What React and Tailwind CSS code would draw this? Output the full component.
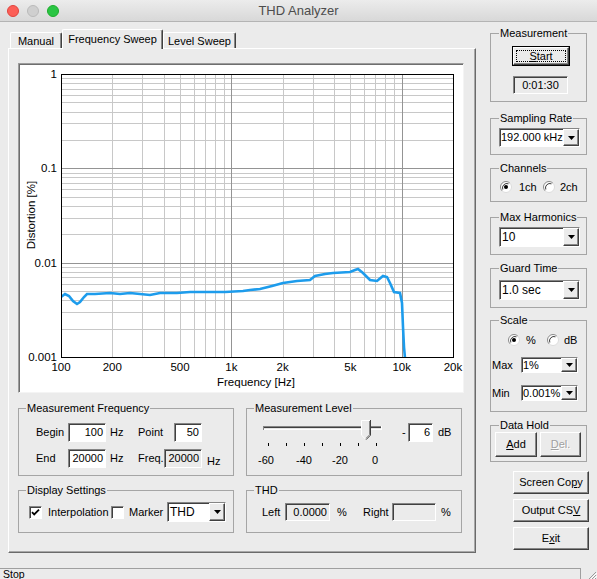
import React from "react";

const sunken =
  "border border-t-[#858585] border-l-[#858585] border-b-white border-r-white shadow-[inset_1px_1px_0_#404040]";
const raised =
  "border border-t-white border-l-white border-b-[#404040] border-r-[#404040] shadow-[inset_-1px_-1px_0_#878787]";

function Group({ title, className = "", legendClass = "ml-[7px]", children }) {
  return (
    <fieldset className={`border border-[#a5a5a5] p-0 m-0 min-w-0 ${className}`}>
      <legend className={`${legendClass} px-[1px] leading-[13px]`}>{title}</legend>
      {children}
    </fieldset>
  );
}

function Field({ className = "", children, white = true, align = "justify-end pr-[2px]" }) {
  return (
    <div
      className={`flex items-center ${align} ${white ? "bg-white" : "bg-[#ebebeb]"} ${sunken} ${className} leading-none whitespace-nowrap overflow-hidden`}
    >
      {children}
    </div>
  );
}

function Arrow() {
  return (
    <svg width="7" height="4" viewBox="0 0 7 4">
      <path d="M0 0H7L3.5 4Z" fill="#000" />
    </svg>
  );
}

function Combo({ className = "", text, textClass = "text-[12px] pl-[2px]" }) {
  return (
    <div className={`flex bg-white ${sunken} ${className}`}>
      <div className={`flex-1 min-w-0 flex items-center overflow-hidden whitespace-nowrap leading-none ${textClass}`}>
        {text}
      </div>
      <div className={`w-[16px] shrink-0 bg-[#ebebeb] ${raised} flex items-center justify-center`}>
        <Arrow />
      </div>
    </div>
  );
}

function Radio({ checked }) {
  return (
    <svg width="12" height="12" viewBox="0 0 12 12" className="shrink-0">
      <circle cx="6" cy="6" r="5.5" fill="#fff" />
      <path d="M2.11 9.89A5.5 5.5 0 0 1 9.89 2.11" fill="none" stroke="#8a8a8a" strokeWidth="1" />
      <path d="M9.89 2.11A5.5 5.5 0 0 1 2.11 9.89" fill="none" stroke="#dcdcdc" strokeWidth="1" />
      <path d="M2.8 8.5A4.4 4.4 0 0 1 8.5 2.8" fill="none" stroke="#404040" strokeWidth="1" />
      {checked && <circle cx="6" cy="6" r="2" fill="#000" />}
    </svg>
  );
}

function Check({ checked }) {
  return (
    <div className={`w-[13px] h-[13px] bg-white ${sunken} shrink-0 flex items-center justify-center`}>
      {checked && (
        <svg width="9" height="9" viewBox="0 0 9 9">
          <path d="M1 4.2L3.2 6.4L8 1.6" fill="none" stroke="#000" strokeWidth="1.8" />
        </svg>
      )}
    </div>
  );
}

function Btn({ className = "", children, disabled }) {
  return (
    <div
      className={`flex items-center justify-center bg-[#ebebeb] ${raised} ${className} ${
        disabled ? "text-[#a0a0a0] [text-shadow:1px_1px_0_#fff]" : ""
      }`}
    >
      {children}
    </div>
  );
}

const X0 = 42,
  Y0 = 10,
  PW = 392,
  PH = 283;
const fx = (f) => X0 + ((Math.log10(f) - 2) * PW) / Math.log10(200);
const vy = (v) => Y0 + (-Math.log10(v) * PH) / 3;
const px = (n) => Math.round(n) + 0.5;

const curveAbs = [
  [61, 297], [65, 294], [69, 296], [73, 301], [77, 304], [80, 302], [84, 297], [87, 294],
  [95, 294], [110, 293], [120, 294], [130, 293], [140, 294], [150, 295], [160, 293],
  [177, 293], [190, 292], [210, 292], [225, 292], [243, 291], [250, 290], [260, 289],
  [272, 286], [283, 283], [297, 281], [310, 280], [315, 276], [325, 274], [333, 273],
  [350, 272], [355, 270], [358, 269], [363, 273], [370, 280], [377, 281], [383, 276],
  [387, 277], [390, 283], [394, 292], [400, 293], [402, 303], [403, 327], [404, 347],
  [405, 358],
];

function Chart() {
  const vMinor = [];
  const vMajor = [1000, 10000];
  [100, 1000].forEach((d) => {
    for (let k = 2; k <= 9; k++) vMinor.push(k * d);
  });
  const hMinor = [];
  const hMajor = [0.01, 0.1];
  [0.001, 0.01, 0.1].forEach((d) => {
    for (let k = 2; k <= 9; k++) hMinor.push(k * d);
  });
  const pts = curveAbs.map(([x, y]) => `${x - 19},${y - 64}`).join(" ");
  const xl = [
    [100, "100"], [200, "200"], [500, "500"], [1000, "1k"], [2000, "2k"], [5000, "5k"],
    [10000, "10k"], [20000, "20k"],
  ];
  const yl = [
    [1, "1"], [0.1, "0.1"], [0.01, "0.01"], [0.001, "0.001"],
  ];
  return (
    <svg width="444" height="328" viewBox="0 0 444 328" className="block">
      <defs>
        <clipPath id="plot">
          <rect x={X0} y={Y0} width={PW + 1} height={PH + 1} />
        </clipPath>
      </defs>
      <g shapeRendering="crispEdges" strokeWidth="1">
        {vMinor.map((f) => (
          <line key={"v" + f} x1={px(fx(f))} x2={px(fx(f))} y1={Y0} y2={Y0 + PH} stroke="#c8c8c8" />
        ))}
        {hMinor.map((v) => (
          <line key={"h" + v} y1={px(vy(v))} y2={px(vy(v))} x1={X0} x2={X0 + PW} stroke="#c8c8c8" />
        ))}
        {vMajor.map((f) => (
          <line key={"V" + f} x1={px(fx(f))} x2={px(fx(f))} y1={Y0} y2={Y0 + PH} stroke="#949494" />
        ))}
        {hMajor.map((v) => (
          <line key={"H" + v} y1={px(vy(v))} y2={px(vy(v))} x1={X0} x2={X0 + PW} stroke="#949494" />
        ))}
      </g>
      <polyline
        points={pts}
        fill="none"
        stroke="#1d9cec"
        strokeWidth="2.6"
        strokeLinejoin="miter"
        clipPath="url(#plot)"
      />
      <rect
        x={X0 + 0.5}
        y={Y0 + 0.5}
        width={PW}
        height={PH}
        fill="none"
        stroke="#000"
        shapeRendering="crispEdges"
      />
      <g fontFamily="'Liberation Sans', Arial, sans-serif" fontSize="11.5" fill="#000">
        {yl.map(([v, t]) => (
          <text key={t} x={38} y={vy(v) + 4} textAnchor="end">
            {t}
          </text>
        ))}
        {xl.map(([f, t]) => (
          <text key={t} x={fx(f)} y={307} textAnchor="middle">
            {t}
          </text>
        ))}
        <text x={237} y={322} textAnchor="middle">
          Frequency [Hz]
        </text>
        <text x={16} y={151} textAnchor="middle" transform="rotate(-90 16 151)">
          Distortion [%]
        </text>
      </g>
    </svg>
  );
}

function Slider() {
  const ticks = [0, 1, 2, 3, 4, 5, 6].map((k) => 8 + 18 * k);
  return (
    <svg width="125" height="34" viewBox="0 0 125 34" className="shrink-0" shapeRendering="crispEdges">
      <rect x="3" y="11" width="119" height="4" fill="#e4e4e4" />
      <line x1="3" x2="122" y1="11.5" y2="11.5" stroke="#858585" />
      <line x1="4" x2="121" y1="12.5" y2="12.5" stroke="#404040" />
      <line x1="3" x2="122" y1="14.5" y2="14.5" stroke="#fff" />
      <line x1="3.5" x2="3.5" y1="11" y2="15" stroke="#858585" />
      <line x1="121.5" x2="121.5" y1="11" y2="15" stroke="#fff" />
      {ticks.map((x) => (
        <line key={x} x1={x + 0.5} x2={x + 0.5} y1="28" y2="31" stroke="#000" />
      ))}
      <g shapeRendering="auto">
        <path d="M101 5H111V20L106 25L101 20Z" fill="#ebebeb" />
        <path d="M101.5 20.2V5.5H110.5" fill="none" stroke="#fff" />
        <path d="M101.5 20.2L106 24.5" fill="none" stroke="#fff" />
        <path d="M110.5 5V20.2L106 24.7" fill="none" stroke="#404040" />
        <path d="M109.5 6V19.8L106 23.3" fill="none" stroke="#878787" />
      </g>
    </svg>
  );
}

function TitleBar() {
  return (
    <div className="h-[22px] shrink-0 grid grid-cols-[1fr_auto_1fr] items-center bg-linear-to-b from-[#ececec] to-[#d8d8d8] border-b border-[#b4b4b4]">
      <div className="flex items-center gap-[8px] pl-[7px]">
        <div className="w-[12px] h-[12px] rounded-full bg-[#fc5f57] border border-[#e0443e]" />
        <div className="w-[12px] h-[12px] rounded-full bg-[#cfcfcf] border border-[#bababa]" />
        <div className="w-[12px] h-[12px] rounded-full bg-[#2ac544] border border-[#1dad2b]" />
      </div>
      <div className="text-[13px] text-[#4d4d4d] leading-none">THD Analyzer</div>
      <div />
    </div>
  );
}

const tabBase =
  "flex items-center justify-center border-t border-l border-r border-t-white border-l-white border-r-[#404040] shadow-[inset_-1px_0_0_#878787] rounded-t-[2px]";

function LeftPane() {
  return (
    <div className="w-[476px] shrink-0 pl-[8px] pt-[7px] flex flex-col">
      <div className="h-[20px] flex items-end pl-[2px]">
        <div className={`w-[52px] h-[17px] ${tabBase}`}>Manual</div>
        <div className={`w-[101px] h-[20px] relative z-10 bg-[#ebebeb] pb-[1px] ${tabBase}`}>
          Frequency Sweep
        </div>
        <div className={`w-[73px] h-[17px] ${tabBase}`}>Level Sweep</div>
      </div>
      <div className="-mt-px w-[468px] h-[505px] border border-t-white border-l-white border-b-[#6a6a6a] border-r-[#6a6a6a] shadow-[inset_-1px_-1px_0_#a8a8a8] pl-[9px] pt-[14px]">
        <div className="w-[446px] h-[330px] bg-white border border-t-[#9c9c9c] border-l-[#9c9c9c] border-b-[#f4f4f4] border-r-[#f4f4f4] shadow-[inset_1px_1px_0_#6e6e6e]">
          <Chart />
        </div>
        <div className="mt-[9px] grid grid-cols-[216px_216px] gap-x-[12px] gap-y-[8px]">
          <Group title="Measurement Frequency" className="h-[74px]">
            <div className="pl-[17px] pt-[8px] flex flex-col gap-[7px]">
              <div className="flex items-center h-[19px]">
                <span className="w-[32px]">Begin</span>
                <Field className="w-[38px] h-[19px]">100</Field>
                <span className="w-[32px] pl-[4px]">Hz</span>
                <span className="w-[36px]">Point</span>
                <Field className="w-[28px] h-[19px]">50</Field>
              </div>
              <div className="flex items-center h-[19px]">
                <span className="w-[32px]">End</span>
                <Field className="w-[38px] h-[19px]">20000</Field>
                <span className="w-[32px] pl-[4px]">Hz</span>
                <span className="w-[26px]">Freq.</span>
                <Field className="w-[38px] h-[19px]" white={false}>
                  20000
                </Field>
                <span className="pl-[5px] pt-[5px]">Hz</span>
              </div>
            </div>
          </Group>
          <Group title="Measurement Level" className="h-[74px]">
            <div className="pl-[13px] flex items-start">
              <Slider />
              <div className="flex items-center h-[19px] mt-[8px] ml-[17px]">
                <span className="w-[6px]">-</span>
                <Field className="w-[25px] h-[19px]">6</Field>
                <span className="ml-[5px]">dB</span>
              </div>
            </div>
            <div className="flex leading-[13px] mt-[5px]">
              <span className="w-[38px] text-center">-60</span>
              <span className="w-[38px] text-center">-40</span>
              <span className="w-[34px] text-center">-20</span>
              <span className="w-[36px] text-center">0</span>
            </div>
          </Group>
          <Group title="Display Settings" className="h-[49px]">
            <div className="pl-[10px] pt-[5px] flex items-center h-[25px]">
              <Check checked />
              <span className="ml-[6px] w-[63px]">Interpolation</span>
              <Check />
              <span className="ml-[5px] w-[38px]">Marker</span>
              <Combo className="w-[59px] h-[20px]" text="THD" />
            </div>
          </Group>
          <Group title="THD" className="h-[49px]">
            <div className="pl-[15px] pt-[6px] flex items-center h-[24px]">
              <span className="w-[23px]">Left</span>
              <Field className="w-[45px] h-[18px]" white={false}>
                0.0000
              </Field>
              <span className="ml-[7px] w-[26px]">%</span>
              <span className="w-[29px]">Right</span>
              <Field className="w-[44px] h-[18px]" white={false}></Field>
              <span className="ml-[5px]">%</span>
            </div>
          </Group>
        </div>
      </div>
    </div>
  );
}

function RightPane() {
  return (
    <div className="pl-[14px] w-[111px] flex flex-col">
      <Group title="Measurement" legendClass="ml-[8px]" className="mt-[5px] h-[75px] w-[97px]">
        <div className="ml-[21px] mt-[6px] w-[58px] h-[20px] border border-black">
          <div className={`h-full flex p-[2px] bg-[#ebebeb] ${raised}`}>
            <div className="flex-1 border border-dotted border-black flex items-center justify-center leading-none">
              <span>
                <span className="underline">S</span>tart
              </span>
            </div>
          </div>
        </div>
        <Field className="ml-[22px] mt-[10px] w-[55px] h-[18px]" white={false} align="justify-center">
          0:01:30
        </Field>
      </Group>
      <Group title="Sampling Rate" legendClass="ml-[8px]" className="mt-[10px] h-[43px] w-[97px]">
        <Combo className="ml-[8px] mt-[3px] w-[81px] h-[19px]" text="192.000 kHz" textClass="text-[11px] pl-[1px]" />
      </Group>
      <Group title="Channels" legendClass="ml-[8px]" className="mt-[7px] h-[40px] w-[97px]">
        <div className="pl-[9px] mt-[6px] h-[12px] flex items-center">
          <Radio checked />
          <span className="ml-[7px] w-[24px]">1ch</span>
          <Radio />
          <span className="ml-[5px]">2ch</span>
        </div>
      </Group>
      <Group title="Max Harmonics" legendClass="ml-[8px]" className="mt-[9px] h-[44px] w-[97px]">
        <Combo className="ml-[8px] mt-[3px] w-[81px] h-[20px]" text="10" />
      </Group>
      <Group title="Guard Time" legendClass="ml-[8px]" className="mt-[7px] h-[46px] w-[97px]">
        <Combo className="ml-[8px] mt-[5px] w-[81px] h-[20px]" text="1.0 sec" />
      </Group>
      <Group title="Scale" legendClass="ml-[8px]" className="mt-[6px] h-[98px] w-[97px]">
        <div className="pl-[17px] mt-[7px] h-[12px] flex items-center">
          <Radio checked />
          <span className="ml-[6px] w-[21px]">%</span>
          <Radio />
          <span className="ml-[5px]">dB</span>
        </div>
        <div className="pl-[1px] mt-[11px] flex items-center h-[16px]">
          <span className="w-[29px]">Max</span>
          <Combo className="w-[57px] h-[16px]" text="1%" textClass="text-[11px] pl-[1px]" />
        </div>
        <div className="pl-[1px] mt-[12px] flex items-center h-[16px]">
          <span className="w-[29px]">Min</span>
          <Combo className="w-[57px] h-[16px]" text="0.001%" textClass="text-[11px] pl-[1px]" />
        </div>
      </Group>
      <Group title="Data Hold" legendClass="ml-[8px]" className="mt-[7px] h-[43px] w-[97px]">
        <div className="pl-[4px] flex gap-[3px]">
          <Btn className="w-[42px] h-[25px]">
            <span>
              <span className="underline">A</span>dd
            </span>
          </Btn>
          <Btn className="w-[41px] h-[25px]" disabled>
            <span>
              <span className="underline">D</span>el.
            </span>
          </Btn>
        </div>
      </Group>
      <Btn className="ml-[23px] mt-[9px] w-[76px] h-[23px]">
        <span>
          Screen Co<span className="underline">p</span>y
        </span>
      </Btn>
      <Btn className="ml-[23px] mt-[5px] w-[76px] h-[23px]">
        <span>
          Output CS<span className="underline">V</span>
        </span>
      </Btn>
      <Btn className="ml-[23px] mt-[5px] w-[76px] h-[23px]">
        <span>
          E<span className="underline">x</span>it
        </span>
      </Btn>
    </div>
  );
}

function StatusBar() {
  return (
    <div className="h-[11px] shrink-0 flex">
      <div className="w-[581px] border-t border-r border-[#9f9f9f] pl-[3px] text-[10.5px] leading-[10px] overflow-hidden">
        Stop
      </div>
      <div className="flex-1 flex items-end justify-end">
        <svg width="11" height="9" viewBox="0 0 11 9">
          <path d="M10 2L3 9M10 5L6 9M10 8L9 9" stroke="#9a9a9a" strokeWidth="1" />
          <path d="M11 3L5 9M11 6L8 9" stroke="#fff" strokeWidth="1" />
        </svg>
      </div>
    </div>
  );
}

export default function App() {
  return (
    <div className="w-[597px] h-[579px] overflow-hidden bg-[#ebebeb] text-black text-[11px] font-['Liberation_Sans',Arial,sans-serif] flex flex-col">
      <TitleBar />
      <div className="flex-1 flex min-h-0">
        <LeftPane />
        <RightPane />
      </div>
      <StatusBar />
    </div>
  );
}
